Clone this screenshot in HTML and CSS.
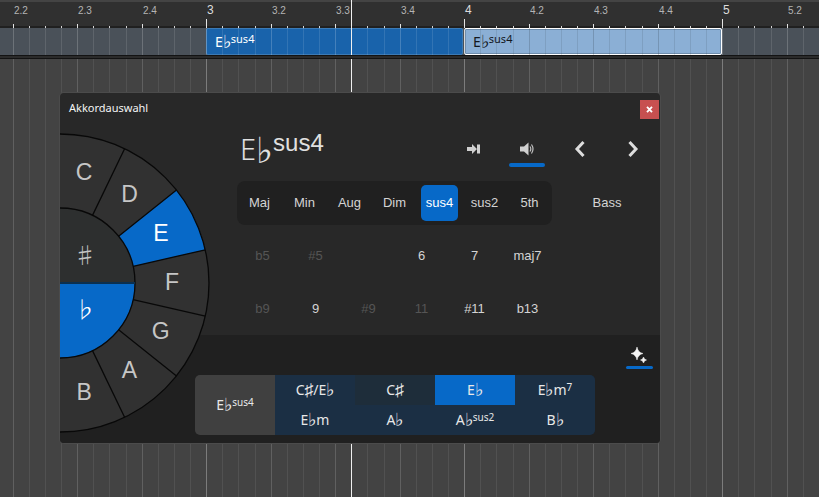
FILE: index.html
```html
<!DOCTYPE html>
<html lang="de">
<head>
<meta charset="utf-8">
<title>Akkordauswahl</title>
<link rel="stylesheet" href="styles.css">
</head>
<body>
<main class="project">
  <div class="ruler bars">
    <div class="bar"><span class="beat"></span><span class="beat">2.2</span><span class="beat">2.3</span><span class="beat">2.4</span></div>
    <div class="bar"><span class="beat">3</span><span class="beat">3.2</span><span class="beat">3.3</span><span class="beat">3.4</span></div>
    <div class="bar"><span class="beat">4</span><span class="beat">4.2</span><span class="beat">4.3</span><span class="beat">4.4</span></div>
    <div class="bar"><span class="beat">5</span><span class="beat">5.2</span><span class="beat"></span><span class="beat"></span></div>
  </div>
  <div class="lane bars">
    <div class="bar"><i class="beat"></i><i class="beat"></i><i class="beat"></i><i class="beat"></i></div>
    <div class="bar"><button class="event" type="button"><span class="chord">E<span class="acc">♭</span><sup>sus4</sup></span></button><i class="beat"></i><i class="beat"></i><i class="beat"></i><i class="beat"></i></div>
    <div class="bar light"><button class="event selected" type="button"><span class="chord">E<span class="acc">♭</span><sup>sus4</sup></span></button><i class="beat"></i><i class="beat"></i><i class="beat"></i><i class="beat"></i></div>
    <div class="bar"><i class="beat"></i><i class="beat"></i><i class="beat"></i><i class="beat"></i></div>
  </div>
  <div class="divider"></div>
  <div class="canvas bars">
    <div class="bar"><i class="beat"></i><i class="beat"></i><i class="beat"></i><i class="beat"></i></div>
    <div class="bar"><i class="beat"></i><i class="beat"></i><i class="beat"></i><i class="beat"></i></div>
    <div class="bar"><i class="beat"></i><i class="beat"></i><i class="beat"></i><i class="beat"></i></div>
    <div class="bar"><i class="beat"></i><i class="beat"></i><i class="beat"></i><i class="beat"></i></div>
  </div>
  <div class="cursor"></div>
</main>

<section class="dialog" aria-labelledby="dialog-title">
  <header class="titlebar">
    <h1 class="title" id="dialog-title">Akkordauswahl</h1>
    <button class="close" type="button" aria-label="Schließen"><svg width="7" height="7" viewBox="0 0 7 7"><path d="M1 .8 6 6.2M6 .8 1 6.2" stroke="#fff" stroke-width="1.8"/></svg></button>
  </header>

  <div class="editor">
    <div class="toolbar">
      <div class="chord current">E<span class="acc">♭</span><sup>sus4</sup></div>
      <div class="tools">
        <button class="tool" type="button" aria-label="Einfügen"><svg width="15" height="12" viewBox="0 0 15 12"><path d="M0 4h5V1l5 5-5 5V8H0zM10 1.500h3v9h-3z" fill="#d0d0d0"/></svg></button>
        <button class="tool on" type="button" aria-label="Vorhören"><svg width="16" height="14" viewBox="0 0 16 14"><path d="M1 4.500h4L9.500 .500v13L5 9.500H1z" fill="#d0d0d0"/><path d="M11 4.500q1.600 2.500 0 5M12.500 2.500q3 4.500 0 9" fill="none" stroke="#c0c0c0" stroke-width="1.200"/></svg></button>
        <button class="tool" type="button" aria-label="Zurück"><svg width="12" height="18" viewBox="0 0 12 18"><path d="M9.500 2 3 9l6.500 7" fill="none" stroke="#ddd" stroke-width="3"/></svg></button>
        <button class="tool" type="button" aria-label="Weiter"><svg width="12" height="18" viewBox="0 0 12 18"><path d="M2.500 2 9 9l-6.500 7" fill="none" stroke="#ddd" stroke-width="3"/></svg></button>
      </div>
    </div>
    <div class="types">
      <div class="type-list">
        <button class="type" type="button">Maj</button>
        <button class="type" type="button">Min</button>
        <button class="type" type="button">Aug</button>
        <button class="type" type="button">Dim</button>
        <button class="type on" type="button">sus4</button>
        <button class="type" type="button">sus2</button>
        <button class="type" type="button">5th</button>
      </div>
      <button class="bass" type="button">Bass</button>
    </div>
    <div class="tensions">
      <button type="button" disabled>b5</button>
      <button type="button" disabled>#5</button>
      <span></span>
      <button type="button">6</button>
      <button type="button">7</button>
      <button type="button">maj7</button>
      <button type="button" disabled>b9</button>
      <button type="button">9</button>
      <button type="button" disabled>#9</button>
      <button type="button" disabled>11</button>
      <button type="button">#11</button>
      <button type="button">b13</button>
    </div>
  </div>

  <footer class="suggestions">
    <button class="magic" type="button" aria-label="Vorschläge"><svg width="18" height="18" viewBox="0 0 18 18"><path d="M7 1Q8 6.500 13 7.500 8 8.500 7 14 6 8.500 1 7.500 6 6.500 7 1zM13.500 11q.5 2.500 3 3-2.500.5-3 3-.5-2.500-3-3 2.500-.5 3-3z" fill="#f4f4f4" stroke="#f4f4f4" stroke-width=".5"/></svg></button>
    <div class="pads">
      <button class="pad origin" type="button"><span class="chord">E<span class="acc">♭</span><sup>sus4</sup></span></button>
      <button class="pad" type="button"><span class="chord">C<span class="acc">♯</span>/E<span class="acc">♭</span></span></button>
      <button class="pad faint" type="button"><span class="chord">C<span class="acc">♯</span></span></button>
      <button class="pad on" type="button"><span class="chord">E<span class="acc">♭</span></span></button>
      <button class="pad" type="button"><span class="chord">E<span class="acc">♭</span>m<sup>7</sup></span></button>
      <button class="pad" type="button"><span class="chord">E<span class="acc">♭</span>m</span></button>
      <button class="pad" type="button"><span class="chord">A<span class="acc">♭</span></span></button>
      <button class="pad" type="button"><span class="chord">A<span class="acc">♭</span><sup>sus2</sup></span></button>
      <button class="pad" type="button"><span class="chord">B<span class="acc">♭</span></span></button>
    </div>
  </footer>

  <div class="wheel">
    <svg class="wheel-art" width="150" height="300" viewBox="0 0 150 300">
      <path d="M0 1a149 149 0 0 1 0 298z" fill="#313131"/>
      <path d="M58.600 103.200 116.500 57.100A149 149 0 0 1 145.300 116.800L73.100 133.300A75 75 0 0 0 58.600 103.200z" fill="#0769c8"/>
      <path d="M0 75a75 75 0 0 1 75 75H0z" fill="#2d2f2f"/>
      <path d="M0 150h75a75 75 0 0 1-75 75z" fill="#0769c8"/>
      <g fill="none" stroke="#080808" stroke-width="1.300">
        <path d="M0 1a149 149 0 0 1 0 298M0 75a75 75 0 0 1 0 150"/>
        <path d="M32.500 82.400 64.600 15.800M58.600 103.200 116.500 57.100M73.100 133.300 145.300 116.800M73.100 166.700 145.300 183.200M58.600 196.800 116.500 242.900M32.500 217.600 64.600 284.200"/>
      </g>
      <path d="M0 150h75" stroke="#0b3050" stroke-width="2"/>
    </svg>
    <button class="note n-c" type="button">C</button>
    <button class="note n-d" type="button">D</button>
    <button class="note n-e on" type="button">E</button>
    <button class="note n-f" type="button">F</button>
    <button class="note n-g" type="button">G</button>
    <button class="note n-a" type="button">A</button>
    <button class="note n-b" type="button">B</button>
    <button class="note sharp" type="button">♯</button>
    <button class="note flat on" type="button">♭</button>
  </div>
</section>
</body>
</html>
```
FILE: styles.css
```css
* { box-sizing: border-box; }
body {
  margin: 0;
  background: #434343;
  color: #d4d4d4;
  font: 13px "Liberation Sans", sans-serif;
  overflow: hidden;
}
button {
  margin: 0;
  padding: 0;
  border: 0;
  background: none;
  color: inherit;
  font: inherit;
}
svg { display: block; }

/* Timeline: 258px per bar, four beats, four sixteenths per beat */
.project {
  position: relative;
  isolation: isolate;
  display: flex;
  flex-direction: column;
  height: 100vh;
  overflow: hidden;
}
.bars { display: flex; margin-left: -52px; }
.bar {
  position: relative;
  flex: none;
  display: grid;
  grid-template-columns: 65px 64px 65px 64px;
}
.beat {
  --sub: #515151;
  --main: #606060;
  background-image:
    linear-gradient(var(--main), var(--main)),
    linear-gradient(var(--sub), var(--sub)),
    linear-gradient(var(--sub), var(--sub)),
    linear-gradient(var(--sub), var(--sub));
  background-repeat: no-repeat;
  background-size: 1px 100%;
  background-position: left 0 top 0, left 16px top 0, left 32px top 0, right 15px top 0;
}
.canvas { flex: 1; }
.canvas .beat:first-child { --main: #7c7c7c; }

.ruler {
  height: 28px;
  background: linear-gradient(#444 2px, #303030 2px, #303030 26px, #202020 26px);
}
.ruler .beat {
  --sub: #d8d8d8;
  --main: #e4e4e4;
  padding: 4px 0 0 1px;
  color: #b4b4b4;
  font-size: 10px;
  line-height: 13px;
  background-size: 1px 4px, 1px 2px, 1px 2px, 1px 2px;
  background-position: left 0 bottom 0, left 16px bottom 0, left 32px bottom 0, right 15px bottom 0;
}
.ruler .beat:first-child {
  color: #dcdcdc;
  font-size: 12px;
  background-size: 1px 9px, 1px 2px, 1px 2px, 1px 2px;
}

.lane { height: 27px; background: #4a5159; }
.lane .beat {
  --sub: #ffffff1c;
  --main: #ffffff30;
  z-index: 1;
  pointer-events: none;
}
.lane .light .beat { --sub: #00000018; --main: #00000028; }
.event {
  position: absolute;
  inset: 0 1px 0 0;
  padding: 0 8px;
  border: 1px solid #3c7ab5;
  border-radius: 2px;
  background: #1963ab;
  color: #fff;
  text-align: left;
  font: 14px/25px "Noto Sans", "Open Sans", sans-serif;
}
.event.selected {
  right: 0;
  border: 1px solid #fff;
  box-shadow: inset 0 0 0 1px #6f8dac;
  background: #8bafd5;
  color: #14181e;
}
.divider {
  position: relative;
  z-index: 2;
  height: 4px;
  background: #2b2b2b;
  border-top: 1px solid #131313;
  border-bottom: 1px solid #131313;
}
.cursor {
  position: absolute;
  z-index: 1;
  top: 0;
  bottom: 0;
  left: 351px;
  width: 1px;
  background: #f0f0f0;
}

/* Chord notation */
.chord { display: inline-block; white-space: nowrap; }
.chord sup {
  font-size: 11px;
  line-height: 1;
  vertical-align: 4px;
}
.acc {
  font-family: "DejaVu Sans", sans-serif;
  font-size: 125%;
  font-weight: 200;
  line-height: 0;
  vertical-align: -1px;
}

/* Dialog window */
.dialog {
  position: absolute;
  top: 93px;
  left: 60px;
  width: 600px;
  background: #282828;
  border-radius: 4px;
  box-shadow: 0 0 0 1px #4b4b4b;
  overflow: hidden;
}
.titlebar {
  display: flex;
  justify-content: space-between;
  height: 32px;
  padding: 7px 1px 0 9px;
}
.title {
  margin: 0;
  color: #f4f4f4;
  font: 11px/16px "Noto Sans", sans-serif;
}
.close {
  display: grid;
  place-items: center;
  width: 19px;
  height: 19px;
  background: #c75050;
}
.editor { height: 210px; padding-left: 177px; }
.toolbar {
  display: flex;
  justify-content: space-between;
  height: 56px;
  padding-left: 3px;
}
.current {
  color: #e0e0e0;
  font: 300 29px/48px "Noto Sans", sans-serif;
}
.current .acc { vertical-align: -3px; }
.current sup { font: 400 24px/1 "Liberation Sans", sans-serif; vertical-align: 9px; }
.tools { display: flex; align-items: flex-start; padding-right: 9px; }
.tool {
  position: relative;
  display: grid;
  place-items: center;
  width: 36px;
  height: 42px;
  margin: 3px 0 0 17px;
}
.tool.on::after {
  content: "";
  position: absolute;
  left: 0;
  right: 0;
  bottom: 3px;
  height: 4px;
  border-radius: 2px;
  background: #0769c8;
}
.types { display: flex; align-items: center; }
.type-list {
  display: flex;
  padding: 4px 0;
  border-radius: 8px;
  background: #202020;
}
.type {
  width: 37px;
  height: 36px;
  margin: 0 4px;
  padding-bottom: 2px;
  border-radius: 5px;
}
.type.on { background: #0769c8; color: #fff; }
.bass { flex: none; width: 110px; height: 36px; padding-bottom: 2px; }
.tensions {
  display: grid;
  grid-template-columns: repeat(6, 53px);
  grid-auto-rows: 53px;
  margin: 4px 0 0 -1px;
}
.tensions button:disabled { color: #555; }

.suggestions {
  display: flex;
  flex-direction: column;
  height: 108px;
  padding: 10px 7px 8px 135px;
  background: #202020;
}
.magic {
  position: relative;
  align-self: flex-end;
  width: 27px;
  height: 24px;
  padding: 1px 4px 5px;
}
.magic::after {
  content: "";
  position: absolute;
  inset: auto 0 0;
  height: 3px;
  border-radius: 2px;
  background: #0769c8;
}
.pads {
  display: grid;
  grid-template-columns: repeat(5, 80px);
  grid-auto-rows: 30px;
  align-self: flex-start;
  margin-top: 6px;
  border-radius: 5px;
  overflow: hidden;
}
.pad {
  background: #1b2f44;
  color: #e8e8e8;
  font: 14px/30px "Noto Sans", sans-serif;
}
.pad sup { font-size: 10px; }
.pad.origin { grid-row: span 2; background: #404040; }
.pad.faint { background: #1e2d3a; }
.pad.on { background: #0769c8; }

/* Root note wheel, laid over the dialog's left edge */
.wheel {
  position: absolute;
  top: 40px;
  left: 0;
}
.note {
  position: absolute;
  top: calc(150px - 113px * cos(var(--angle)));
  left: calc(113px * sin(var(--angle)));
  width: 30px;
  height: 30px;
  margin: -16px;
  color: #c6c6c6;
  font-size: 23px;
  line-height: 30px;
}
.note.on { color: #fff; }
.n-c { --angle: 12.857deg; }
.n-d { --angle: 38.571deg; }
.n-e { --angle: 64.286deg; }
.n-f { --angle: 90deg; }
.n-g { --angle: 115.714deg; }
.n-a { --angle: 141.429deg; }
.n-b { --angle: 167.143deg; }
.sharp, .flat {
  left: 26px;
  font-family: "Noto Sans CJK JP", sans-serif;
  font-weight: 300;
}
.sharp { top: 122px; }
.flat { top: 176px; }
```
